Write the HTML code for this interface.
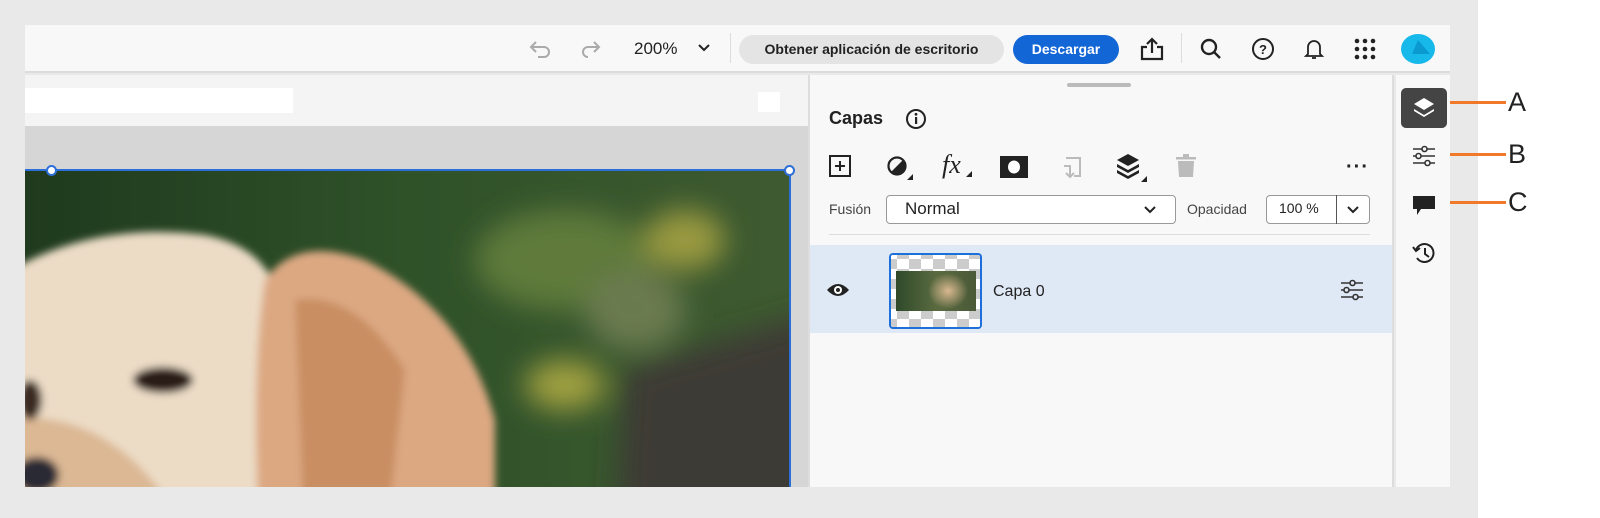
<!DOCTYPE html>
<html style="overflow:hidden;height:518px"><head><meta charset="utf-8"><style>
*{margin:0;padding:0;box-sizing:border-box}
body{width:1600px;height:518px;background:#fff;font-family:"Liberation Sans",sans-serif;position:relative;overflow:hidden;color:#222}
.abs{position:absolute}
svg{overflow:hidden}
</style></head><body>
<div class="abs" style="left:0;top:0;width:1478px;height:518px;background:#e9e9e9"></div>
<div class="abs" style="left:25px;top:25px;width:1425px;height:48px;background:#f8f8f8;border-bottom:2px solid #dcdcdc"></div>
<svg class="abs" style="left:528px;top:38px" width="80" height="22" viewBox="0 0 80 22" fill="none" stroke="#aaa" stroke-width="2"><path d="M8 4 L3 9 L8 14 M3 9 H16 a5 5 0 0 1 0 10 H10"/><path d="M66 4 L71 9 L66 14 M71 9 H60 a5 5 0 0 0 0 10 V19"/></svg>
<div class="abs" style="left:634px;top:39px;font-size:17px">200%</div>
<svg class="abs" style="left:697px;top:42px" width="14" height="12" viewBox="0 0 14 12" fill="none" stroke="#222" stroke-width="2"><path d="M2 3 L7 8 L12 3"/></svg>
<div class="abs" style="left:730px;top:33px;width:1px;height:30px;background:#ddd"></div>
<div class="abs" style="left:739px;top:35px;width:265px;height:29px;border-radius:15px;background:#e4e4e4;font-size:14px;font-weight:bold;line-height:29px;text-align:center">Obtener aplicación de escritorio</div>
<div class="abs" style="left:1013px;top:35px;width:106px;height:29px;border-radius:15px;background:#1366d6;color:#fff;font-size:14px;font-weight:bold;line-height:29px;text-align:center">Descargar</div>
<svg class="abs" style="left:1138px;top:35px" width="28" height="28" viewBox="0 0 28 28" fill="none" stroke="#222" stroke-width="2.2"><path d="M9 12 H4 V24 H24 V12 H19"/><path d="M14 18 V4 M9 9 L14 4 L19 9"/></svg>
<div class="abs" style="left:1181px;top:33px;width:1px;height:30px;background:#ddd"></div>
<svg class="abs" style="left:1198px;top:37px" width="26" height="24" viewBox="0 0 26 24" fill="none" stroke="#222" stroke-width="2.4"><circle cx="11" cy="10" r="7"/><path d="M16 15 L22 21"/></svg>
<svg class="abs" style="left:1250px;top:36px" width="26" height="26" viewBox="0 0 26 26" fill="none" stroke="#222" stroke-width="2"><circle cx="13" cy="13" r="10"/><text x="13" y="18" font-size="13" font-weight="bold" text-anchor="middle" fill="#222" stroke="none" font-family="Liberation Sans">?</text></svg>
<svg class="abs" style="left:1302px;top:37px" width="24" height="24" viewBox="0 0 24 24" fill="none" stroke="#222" stroke-width="1.8"><path d="M6 17 V10 a6 6 0 0 1 12 0 V17 L20 19 H4 Z"/><path d="M10 21 h4"/></svg>
<svg class="abs" style="left:1354px;top:38px" width="22" height="22" viewBox="0 0 22 22" fill="#222"><circle cx="3" cy="3" r="2.3"/><circle cx="11" cy="3" r="2.3"/><circle cx="19" cy="3" r="2.3"/><circle cx="3" cy="11" r="2.3"/><circle cx="11" cy="11" r="2.3"/><circle cx="19" cy="11" r="2.3"/><circle cx="3" cy="19" r="2.3"/><circle cx="11" cy="19" r="2.3"/><circle cx="19" cy="19" r="2.3"/></svg>
<svg class="abs" style="left:1400px;top:34px" width="36" height="30" viewBox="0 0 36 30"><ellipse cx="18" cy="15" rx="17" ry="15" fill="#17b8ea"/><path d="M18 6 L30 20 L12 20 Z" fill="#0a9ad0"/></svg>
<div class="abs" style="left:25px;top:75px;width:783px;height:51px;background:#f4f4f4"></div>
<div class="abs" style="left:25px;top:88px;width:268px;height:25px;background:#fff"></div>
<div class="abs" style="left:758px;top:92px;width:22px;height:20px;background:#fff"></div>
<div class="abs" style="left:25px;top:126px;width:783px;height:361px;background:#d6d6d6"></div>
<div class="abs" style="left:25px;top:170px;width:765px;height:317px;overflow:hidden">
<svg width="765" height="317" viewBox="0 0 765 317" style="display:block">
<defs><filter id="b" x="-30%" y="-30%" width="160%" height="160%"><feGaussianBlur stdDeviation="14"/></filter>
<filter id="s" x="-30%" y="-30%" width="160%" height="160%"><feGaussianBlur stdDeviation="4"/></filter>
<linearGradient id="bg" x1="0" x2="1"><stop offset="0" stop-color="#1f3a1e"/><stop offset=".5" stop-color="#2f5229"/><stop offset="1" stop-color="#3e5a30"/></linearGradient></defs>
<rect width="765" height="317" fill="url(#bg)"/>
<g filter="url(#b)">
<ellipse cx="540" cy="90" rx="90" ry="50" fill="#5e7a3a"/>
<ellipse cx="660" cy="70" rx="40" ry="30" fill="#9a9a40"/>
<ellipse cx="540" cy="215" rx="40" ry="25" fill="#a0a040"/>
<ellipse cx="610" cy="140" rx="50" ry="40" fill="#6a7a50"/>
<path d="M600 200 L800 140 L800 380 L590 380Z" fill="#3e3a35"/>
</g>
<g filter="url(#s)">
<path d="M-30 110 Q60 50 180 65 Q255 80 255 150 L250 380 L-30 380Z" fill="#ecdcc6"/>
<path d="M-30 250 Q100 230 170 380 L-30 380Z" fill="#dcb894"/>
<path d="M240 110 Q270 65 340 90 Q440 140 470 250 L470 380 L235 380 Q225 200 240 110Z" fill="#dca882"/>
<path d="M270 130 Q330 120 380 200 L360 380 L280 380Z" fill="#c98e62"/>
<ellipse cx="138" cy="210" rx="30" ry="13" fill="#2a1c14"/>
<ellipse cx="5" cy="230" rx="12" ry="20" fill="#3a2a20"/>
<ellipse cx="12" cy="305" rx="22" ry="18" fill="#2a2c34"/>
</g>
</svg></div>
<div class="abs" style="left:25px;top:169px;width:765px;height:2px;background:#2d6fd8"></div>
<div class="abs" style="left:789px;top:169px;width:2px;height:318px;background:#2d6fd8"></div>
<div class="abs" style="left:46px;top:165px;width:11px;height:11px;border-radius:50%;background:#fff;border:2px solid #2d6fd8"></div>
<div class="abs" style="left:784px;top:165px;width:11px;height:11px;border-radius:50%;background:#fff;border:2px solid #2d6fd8"></div>
<div class="abs" style="left:808px;top:75px;width:586px;height:412px;background:#f8f8f8;border-left:2px solid #ddd;border-right:2px solid #ddd"></div>
<div class="abs" style="left:1067px;top:83px;width:64px;height:4px;border-radius:2px;background:#bbb"></div>
<div class="abs" style="left:829px;top:108px;font-size:18px;font-weight:bold;color:#222">Capas</div>
<svg class="abs" style="left:905px;top:108px" width="22" height="22" viewBox="0 0 22 22"><circle cx="11" cy="11" r="9" fill="none" stroke="#222" stroke-width="2"/><rect x="10" y="9" width="2.2" height="7" fill="#222"/><circle cx="11" cy="6.3" r="1.4" fill="#222"/></svg>
<svg class="abs" style="left:828px;top:154px" width="24" height="24" viewBox="0 0 24 24" fill="none" stroke="#222" stroke-width="2"><rect x="2" y="2" width="20" height="20"/><path d="M12 7 V17 M7 12 H17"/></svg>
<svg class="abs" style="left:886px;top:155px" width="30" height="26" viewBox="0 0 30 26"><circle cx="11" cy="11" r="8.5" fill="none" stroke="#222" stroke-width="2.2"/><path d="M17 5 A8.5 8.5 0 0 1 5 17 Z" fill="#222"/><path d="M27 19 V25 H21 Z" fill="#222"/></svg>
<div class="abs" style="left:942px;top:150px;font-size:26px;line-height:30px;font-style:italic;font-family:'Liberation Serif',serif">fx</div>
<svg class="abs" style="left:965px;top:170px" width="8" height="8"><path d="M7 1 V7 H1 Z" fill="#222"/></svg>
<svg class="abs" style="left:1000px;top:156px" width="28" height="22" viewBox="0 0 28 22"><rect x="0" y="0" width="28" height="22" fill="#222"/><ellipse cx="14" cy="11" rx="6" ry="6.5" fill="#fff"/></svg>
<svg class="abs" style="left:1058px;top:154px" width="26" height="26" viewBox="0 0 26 26" fill="none" stroke="#bbb" stroke-width="2"><path d="M8 4 H22 V22 H16"/><path d="M6 12 H12 V22 M8 19 L12 23 L16 19"/></svg>
<svg class="abs" style="left:1116px;top:153px" width="32" height="30" viewBox="0 0 32 30" fill="#222"><path d="M12 1 L23 7 L12 13 L1 7 Z"/><path d="M1 11 L12 17 L23 11 L23 14 L12 20 L1 14Z"/><path d="M1 17 L12 23 L23 17 L23 20 L12 26 L1 20Z"/><path d="M31 23 V29 H25 Z"/></svg>
<svg class="abs" style="left:1175px;top:154px" width="22" height="24" viewBox="0 0 22 24" fill="#bbb"><rect x="1" y="3" width="20" height="2.5"/><rect x="8" y="0" width="6" height="3"/><path d="M3 7 H19 L18 23 H4 Z"/></svg>
<div class="abs" style="left:1346px;top:157px;font-size:20px;line-height:20px;font-weight:bold;letter-spacing:1px">···</div>
<div class="abs" style="left:829px;top:201px;font-size:14px;color:#444">Fusión</div>
<div class="abs" style="left:886px;top:195px;width:290px;height:29px;border:1px solid #999;border-radius:4px;background:#fff"></div>
<div class="abs" style="left:905px;top:199px;font-size:17px">Normal</div>
<svg class="abs" style="left:1143px;top:204px" width="14" height="12" viewBox="0 0 14 12" fill="none" stroke="#222" stroke-width="2"><path d="M2 3 L7 8 L12 3"/></svg>
<div class="abs" style="left:1187px;top:201px;font-size:14px;color:#444">Opacidad</div>
<div class="abs" style="left:1266px;top:195px;width:104px;height:29px;border:1px solid #999;border-radius:4px;background:#fff"></div>
<div class="abs" style="left:1336px;top:195px;width:1px;height:29px;background:#555"></div>
<div class="abs" style="left:1279px;top:200px;font-size:14px">100 %</div>
<svg class="abs" style="left:1346px;top:204px" width="14" height="12" viewBox="0 0 14 12" fill="none" stroke="#222" stroke-width="2"><path d="M2 3 L7 8 L12 3"/></svg>
<div class="abs" style="left:829px;top:234px;width:541px;height:1px;background:#ddd"></div>
<div class="abs" style="left:810px;top:245px;width:582px;height:88px;background:#dfe8f5"></div>
<svg class="abs" style="left:826px;top:282px" width="24" height="16" viewBox="0 0 24 16"><path d="M1 8 Q12 -4 23 8 Q12 20 1 8Z" fill="#222"/><circle cx="12" cy="8" r="4" fill="#fff"/><circle cx="12" cy="8" r="2" fill="#222"/></svg>
<div class="abs" style="left:889px;top:253px;width:93px;height:76px;border:2px solid #1d6fd9;border-radius:4px;background:#fff;overflow:hidden">
<div style="position:absolute;left:0;top:0;width:100%;height:100%;background:repeating-conic-gradient(#ccc 0 25%,#fff 0 50%) 6px 4px/24px 20px"></div>
<div style="position:absolute;left:5px;top:16px;width:80px;height:40px;background:radial-gradient(ellipse 20px 18px at 52px 20px,#d9b890,rgba(0,0,0,0)),linear-gradient(90deg,#2f4a2a,#5a6a40,#4a5a38)"></div></div>
<div class="abs" style="left:993px;top:283px;font-size:16px">Capa 0</div>
<svg class="abs" style="left:1340px;top:279px" width="24" height="22" viewBox="0 0 24 22" fill="none" stroke="#333" stroke-width="1.6"><path d="M1 4 H10 M15 4 H23 M1 11 H4 M9 11 H23 M1 18 H13 M18 18 H23"/><circle cx="12.5" cy="4" r="2.5"/><circle cx="6.5" cy="11" r="2.5"/><circle cx="15.5" cy="18" r="2.5"/></svg>
<div class="abs" style="left:1396px;top:75px;width:54px;height:412px;background:#f8f8f8"></div>
<div class="abs" style="left:1401px;top:88px;width:46px;height:40px;border-radius:5px;background:#444"></div>
<svg class="abs" style="left:1411px;top:96px" width="26" height="24" viewBox="0 0 26 24" fill="#fff"><path d="M13 2 L23 8 L13 14 L3 8Z"/><path d="M3 13 L13 19 L23 13 L23 15 L13 21 L3 15Z"/></svg>
<svg class="abs" style="left:1412px;top:145px" width="24" height="22" viewBox="0 0 24 22" fill="none" stroke="#333" stroke-width="1.6"><path d="M1 4 H10 M15 4 H23 M1 11 H4 M9 11 H23 M1 18 H13 M18 18 H23"/><circle cx="12.5" cy="4" r="2.5"/><circle cx="6.5" cy="11" r="2.5"/><circle cx="15.5" cy="18" r="2.5"/></svg>
<svg class="abs" style="left:1412px;top:195px" width="24" height="22" viewBox="0 0 24 22" fill="#222"><path d="M1 1 H23 V14 H9 L5 20 V14 H1Z"/></svg>
<svg class="abs" style="left:1411px;top:241px" width="26" height="24" viewBox="0 0 26 24" fill="none" stroke="#222" stroke-width="2"><path d="M5 9 A9 9 0 1 1 6 17"/><path d="M2 6 L5 10 L9 7"/><path d="M14 7 V13 L18 16"/></svg>
<div class="abs" style="left:1450px;top:101px;width:56px;height:3px;background:#f07a2a"></div>
<div class="abs" style="left:1450px;top:153px;width:56px;height:3px;background:#f07a2a"></div>
<div class="abs" style="left:1450px;top:201px;width:56px;height:3px;background:#f07a2a"></div>
<div class="abs" style="left:1508px;top:87px;font-size:27px;line-height:30px">A</div>
<div class="abs" style="left:1508px;top:139px;font-size:27px;line-height:30px">B</div>
<div class="abs" style="left:1508px;top:187px;font-size:27px;line-height:30px">C</div>
</body></html>
